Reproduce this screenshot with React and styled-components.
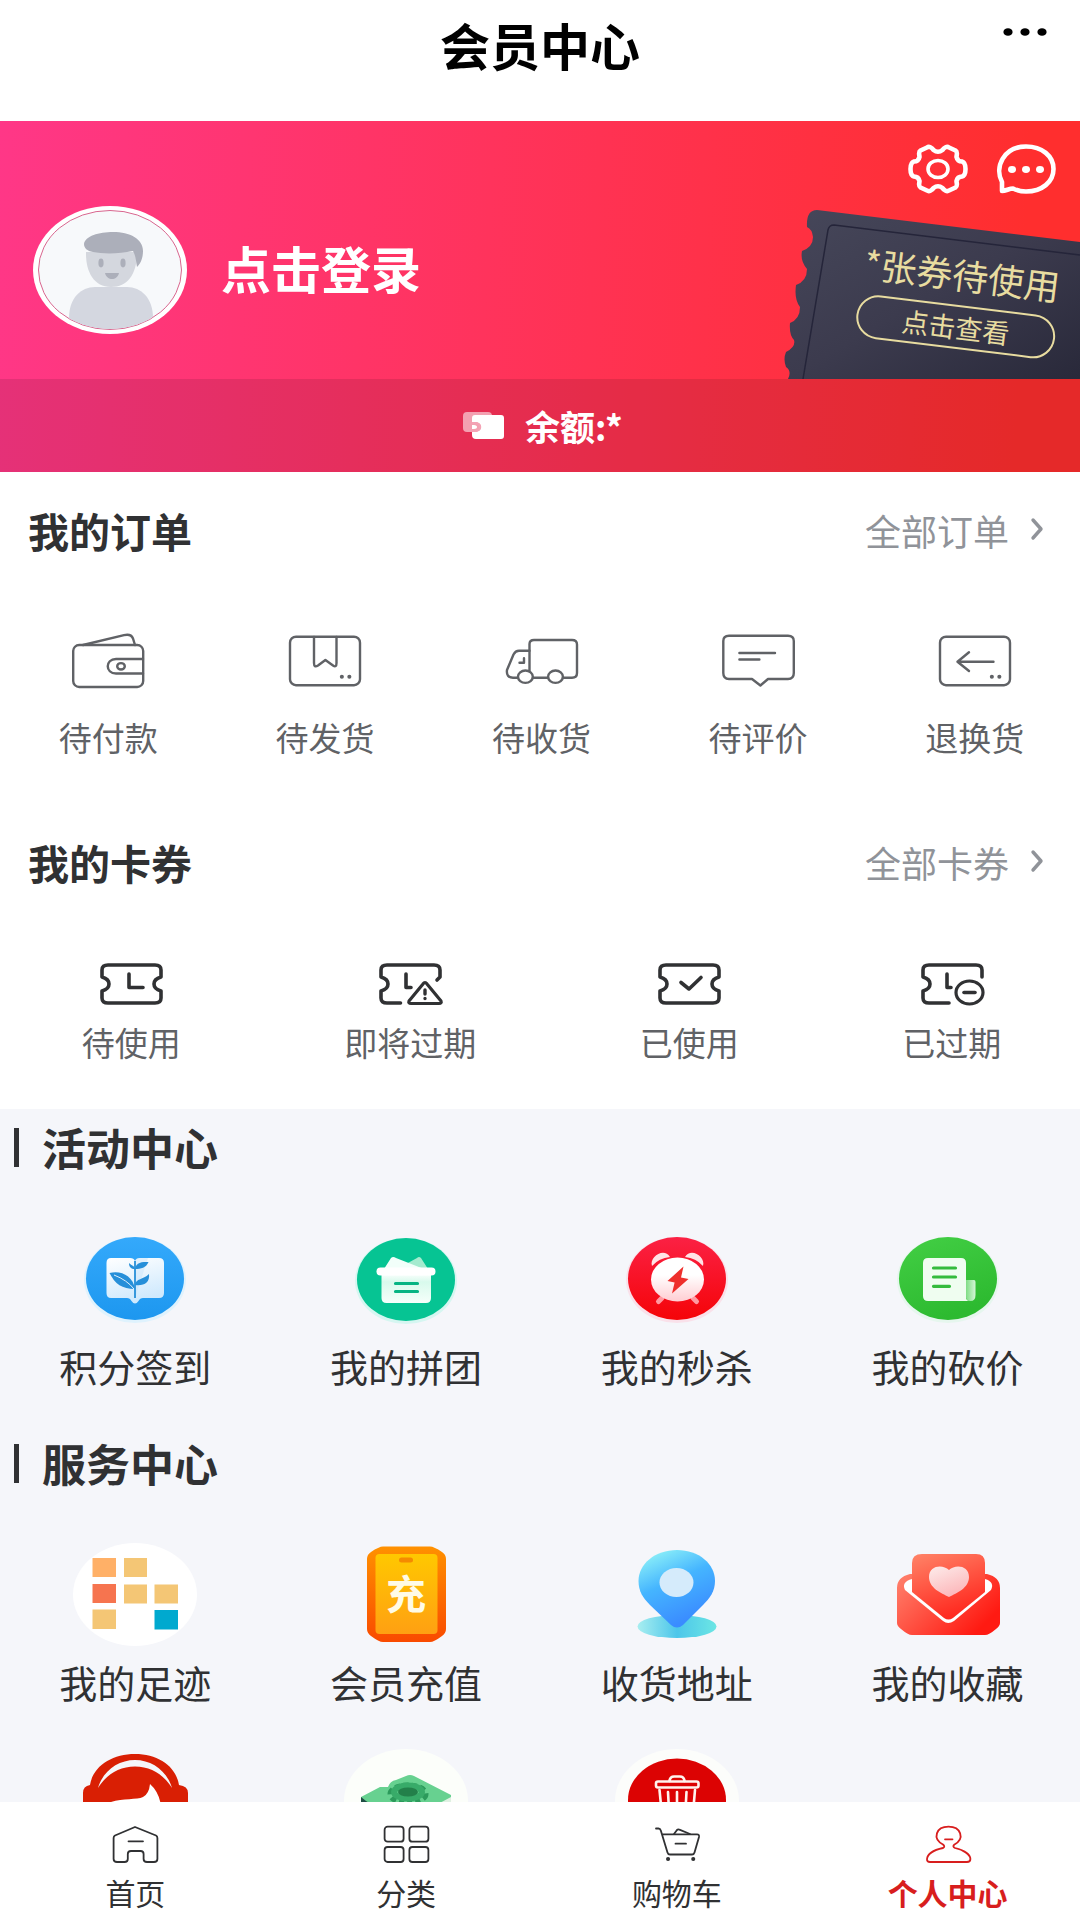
import React from "react";
import styled, { createGlobalStyle } from "styled-components";

const GlobalStyle = createGlobalStyle`
  * {
    box-sizing: border-box;
  }
  body {
    margin: 0;
    background-color: #ffffff;
    font-family: "Noto Sans CJK SC", "Noto Sans", sans-serif;
    color: #303133;
  }
  button {
    border: none;
    padding: 0;
    background: none;
    font-family: inherit;
    color: inherit;
    cursor: pointer;
  }
  a {
    color: inherit;
    text-decoration: none;
  }
  svg {
    display: block;
    flex-shrink: 0;
  }
`;

export const Page = styled.div`
  height: 100vh;
  display: flex;
  flex-direction: column;
  overflow: hidden;
`;
export const Content = styled.main`
  flex: 1;
  min-height: 0;
  overflow-x: hidden;
  overflow-y: auto;
  scrollbar-width: none;
`;

/* header */
export const Header = styled.header`
  display: grid;
  grid-template-columns: 1fr auto 1fr;
  align-items: start;
  padding: 14px 32px 47px;
`;
export const Title = styled.h1`
  grid-column: 2;
  margin: 0;
  font-size: 50px;
  line-height: 60px;
  font-weight: 700;
  color: #000000;
`;
export const MoreButton = styled.button`
  justify-self: end;
  height: 36px;
`;

/* banner */
export const Banner = styled.section`
  background: linear-gradient(93deg, #ff3787 0%, #ff335c 45%, #ff2e2e 94%);
  color: #ffffff;
`;
export const Profile = styled.div`
  position: relative;
  height: 258px;
  padding: 40px 33px 0;
  display: flex;
  align-items: center;
  overflow: hidden;
`;
export const LoginButton = styled.button`
  display: flex;
  align-items: center;
  gap: 34px;
`;
export const LoginText = styled.span`
  padding-bottom: 6px;
  font-size: 50px;
  line-height: 60px;
  font-weight: 700;
`;
export const BannerTools = styled.div`
  position: absolute;
  top: 23px;
  right: 24px;
  display: flex;
  gap: 28px;
`;
export const Ticket = styled.div`
  position: absolute;
  right: 0;
  bottom: 0;
  width: 300px;
  height: 170px;
`;
export const TicketBody = styled.div`
  position: absolute;
  top: 42px;
  left: 79px;
  width: 200px;
  display: flex;
  flex-direction: column;
  align-items: center;
  gap: 10px;
  transform: rotate(7deg);
  color: #e8dca0;
  white-space: nowrap;
`;
export const TicketText = styled.p`
  margin: 0;
  font-size: 36px;
  line-height: 44px;
`;
export const TicketButton = styled.button`
  width: 100%;
  height: 44px;
  border: 2px solid #e8dca0;
  border-radius: 22px;
  font-size: 27px;
  line-height: 36px;
`;
export const Balance = styled.div`
  display: flex;
  align-items: center;
  justify-content: center;
  gap: 20px;
  height: 93px;
  padding-left: 6px;
  background-color: rgba(0, 0, 0, 0.1);
  font-size: 35px;
  line-height: 44px;
  font-weight: 700;
`;

/* orders and coupons */
export const Panel = styled.section`
  padding: 28px 0 47px;
`;
export const PanelHead = styled.div`
  display: flex;
  align-items: center;
  justify-content: space-between;
  padding: 0 36px 0 28px;
`;
export const PanelTitle = styled.h2`
  margin: 0;
  font-size: 41px;
  line-height: 60px;
  font-weight: 700;
`;
export const PanelLink = styled.a`
  display: flex;
  align-items: center;
  gap: 21px;
  font-size: 36px;
  line-height: 44px;
  color: #909399;
`;
export const OrderList = styled.div`
  display: grid;
  grid-template-columns: repeat(5, 1fr);
  margin: 72px -3px 0 0;
`;
export const CouponList = styled.div`
  display: flex;
  justify-content: space-around;
  margin: 69px -3px 0 0;
`;
export const PanelItem = styled.a`
  display: flex;
  flex-direction: column;
  align-items: center;
  gap: ${({ $gap }) => $gap};
  font-size: 33px;
  line-height: 40px;
  color: #606266;
`;
export const CouponIcon = styled.span`
  color: #303133;
`;

/* activity and service centers */
export const Center = styled.div`
  background-color: #f5f6fa;
  padding-top: 8px;
`;
export const CenterTitle = styled.h2`
  display: flex;
  align-items: center;
  gap: 23px;
  margin: 0;
  padding-left: 14px;
  font-size: 44px;
  line-height: 60px;
  font-weight: 700;
  &::before {
    content: "";
    width: 5px;
    height: 39px;
    background-color: #303133;
  }
`;
export const CenterGrid = styled.div`
  display: grid;
  grid-template-columns: repeat(4, 1fr);
  row-gap: 40px;
  margin-right: -3px;
  padding: 50px 0 40px;
`;
export const CenterItem = styled.a`
  display: flex;
  flex-direction: column;
  align-items: center;
  gap: 10px;
  min-height: 166px;
  font-size: 38px;
  line-height: 50px;
`;

/* bottom tabs */
export const TabBar = styled.nav`
  display: grid;
  grid-template-columns: repeat(4, 1fr);
  height: 118px;
  margin-right: -3px;
  padding-top: 22px;
  background-color: #ffffff;
`;
export const Tab = styled.a`
  display: flex;
  flex-direction: column;
  align-items: center;
  gap: 10px;
  font-size: 30px;
  line-height: 36px;
  color: ${({ $active }) => ($active ? "#d81e1e" : "#303133")};
  font-weight: ${({ $active }) => ($active ? 700 : 400)};
`;

const Line = ({ w, h, stroke = 2.4, children }) => (
  <svg
    width={w}
    height={h}
    viewBox={`0 0 ${w} ${h}`}
    fill="none"
    stroke="currentColor"
    strokeWidth={stroke}
    strokeLinecap="round"
    strokeLinejoin="round"
    aria-hidden="true"
  >
    {children}
  </svg>
);

const Badge = ({ children }) => (
  <svg width="124" height="104" viewBox="0 0 124 104" aria-hidden="true">
    {children}
  </svg>
);

const Avatar = () => (
  <svg width="154" height="128" viewBox="0 0 154 128" aria-hidden="true">
    <defs>
      <clipPath id="face">
        <ellipse cx="77" cy="64" rx="71" ry="59" />
      </clipPath>
    </defs>
    <ellipse cx="77" cy="64" rx="77" ry="64" fill="#ffffff" />
    <ellipse cx="77" cy="64" rx="71.5" ry="59.5" fill="#f7f9fb" stroke="#d9668f" strokeWidth="1" />
    <g clipPath="url(#face)">
      <path d="M36 112C36 92 48 81 62 81H94C108 81 120 92 120 112V128H36Z" fill="#d4d7e0" />
      <path d="M53 48C53 66 61 81 78 81S104 68 104 46H53Z" fill="#d4d7de" />
      <path d="M51 38C52 30 66 26 80 26C97 26 110 33 110 45C110 53 107 58 104 61C103 56 103 50 100 45C86 48 70 48 60 46C54 45 51 42 51 38Z" fill="#acafba" />
      <ellipse cx="68" cy="57" rx="2.6" ry="4.4" fill="#acafba" />
      <ellipse cx="90" cy="57" rx="2.6" ry="4.4" fill="#acafba" />
      <path d="M72 67H86C85 71 82 73 79 73S73 71 72 67Z" fill="#acafba" />
    </g>
  </svg>
);

const GearIcon = () => (
  <Line w={60} h={50} stroke={4.6}>
    <path d="M19 3.5C21 2 24 3.5 25.500 6Q30 9.500 34.500 6C36 3.500 39 2 41 3.500L47.500 6.500C50 8 48.500 11 48.500 13Q49.500 17.500 54 17.500C57.500 18.500 57.500 22 57.500 25S57.500 31.500 54 32.500Q49.500 32.500 48.500 37C48.500 39 50 42 47.500 43.500L41 46.500C39 48 36 46.500 34.500 44Q30 40.500 25.500 44C24 46.500 21 48 19 46.500L12.500 43.500C10 42 11.500 39 11.500 37Q10.500 32.500 6 32.500C2.500 31.500 2.500 28 2.500 25S2.500 18.500 6 17.500Q10.500 17.500 11.500 13C11.500 11 10 8 12.500 6.500Z" />
    <ellipse cx="30" cy="25" rx="10" ry="8.500" strokeWidth="3.600" />
  </Line>
);

const ChatIcon = () => (
  <Line w={60} h={50} stroke={4.6}>
    <path d="M6 47V38C-2 23 8 2.500 30 2.500C46 2.500 57.500 12 57.500 25S46 47.500 30 47.500C25 47.500 21 46.500 17 44.500C13 44.500 10 47 6 47Z" />
    <g fill="currentColor" stroke="none">
      <ellipse cx="16" cy="25.500" rx="4" ry="3.400" />
      <ellipse cx="30" cy="25.500" rx="4" ry="3.400" />
      <ellipse cx="44" cy="25.500" rx="4" ry="3.400" />
    </g>
  </Line>
);

const TicketShape = () => (
  <svg width="300" height="170" viewBox="0 0 300 170" aria-hidden="true">
    <defs>
      <linearGradient id="ticket" x1="0" y1="0" x2="1" y2="1">
        <stop offset="0" stopColor="#46475a" />
        <stop offset="0.500" stopColor="#3c3b4e" />
        <stop offset="1" stopColor="#29293a" />
      </linearGradient>
    </defs>
    <path
      d="M37 1L300 33V170H8Q12 162 6 158Q3 150 6 143Q16 138 14 131Q9 126 10 114Q20 110 20 98Q14 90 16 76Q27 72 27 60Q20 52 22 42Q33 38 33 28Q32 20 27 18Q26 1 37 1Z"
      fill="url(#ticket)"
    />
    <path d="M23 170L48 21Q49 16 54 16L300 46" fill="none" stroke="#25253a" strokeWidth="1.500" />
  </svg>
);

const PurseIcon = () => (
  <svg width="42" height="30" viewBox="0 0 42 30" aria-hidden="true">
    <rect x="0" y="1" width="29" height="20" rx="4" fill="#ffffff" opacity="0.550" />
    <path d="M12 4H38Q41 4 41 7V25Q41 28 38 28H13Q9 28 9 24V21H12C20 21 20 11 12 11H9V7Q9 4 12 4Z" fill="#ffffff" />
    <path d="M9 12H12C19 12 19 20 12 20H9" fill="none" stroke="#f4a3b5" strokeWidth="2" />
    <path d="M9 14H11C15 14 15 18 11 18H9Z" fill="#ffffff" />
  </svg>
);

const orders = [
  {
    name: "待付款",
    icon: (
      <>
        <rect x="5.200" y="13" width="70" height="42" rx="6" />
        <path d="M15 13L56 3.200Q63 1.500 65 6.500L67 13" />
        <path d="M75 27H48C37 27 37 41.500 48 41.500H75" />
        <ellipse cx="53" cy="34.300" rx="3.800" ry="3.200" />
      </>
    ),
  },
  {
    name: "待发货",
    icon: (
      <>
        <rect x="5" y="4.700" width="70" height="48.500" rx="6" />
        <path d="M29 5V31Q29 36 33 33.500L40.400 28L48 33.500Q51.500 36 51.500 31V5" />
        <path d="M56.800 44.700h.1M64.300 44.700h.1" strokeWidth="4" />
      </>
    ),
  },
  {
    name: "待收货",
    icon: (
      <>
        <path d="M16.500 45.700H12Q5 45.700 6 38L12.500 22.500Q14.500 18.700 18 18.700H28.500" />
        <path d="M28.500 39V12Q28.500 8 33 8H71Q76 8 76 12.500V41Q76 45.700 71 45.700H62M47 45.700H32" />
        <ellipse cx="24.400" cy="44.700" rx="7.400" ry="6.200" />
        <ellipse cx="54.500" cy="44.700" rx="7.400" ry="6.200" />
        <path d="M23 26.300V30.700H18.500" />
      </>
    ),
  },
  {
    name: "待评价",
    icon: (
      <>
        <path d="M11 3.700H70Q75.800 3.700 75.800 9V41Q75.800 47 70 47H50L42.400 53.500L34 47H11Q5.300 47 5.300 41V9Q5.300 3.700 11 3.700Z" />
        <path d="M21.400 21H57M21.400 27.500H41.400" />
      </>
    ),
  },
  {
    name: "退换货",
    icon: (
      <>
        <rect x="5" y="4.700" width="70" height="48.500" rx="6" />
        <path d="M58.500 29.700H22.500M34 20.300L22.500 29.700L34 39" />
        <path d="M56.800 44.700h.1M64.300 44.700h.1" strokeWidth="4" />
      </>
    ),
  },
];

const couponFrame =
  "M11 4H58Q64 4 64 9V16Q57 18 57 23T64 30V37Q64 42 58 42H11Q5 42 5 37V30Q12 28 12 23T5 16V9Q5 4 11 4Z";

const coupons = [
  {
    name: "待使用",
    icon: (
      <>
        <path d={couponFrame} />
        <path d="M32 13V26.500H46" />
      </>
    ),
  },
  {
    name: "即将过期",
    icon: (
      <>
        <path d="M24.500 42H11Q5 42 5 37V30Q12 28 12 23T5 16V9Q5 4 11 4H58Q64 4 64 9V16L61 19" />
        <path d="M30 13V26.500H35" />
        <path d="M49 21.500Q50 21.500 51 23L65 40Q66 42.500 63 42.500H35Q32 42.500 33 40L47 23Q48 21.500 49 21.500Z" strokeWidth="3.200" />
        <path d="M49 29V33M49 37.500V37.600" strokeWidth="3.400" />
      </>
    ),
  },
  {
    name: "已使用",
    icon: (
      <>
        <path d={couponFrame} />
        <path d="M26 21.500L34 28L46 16.500" />
      </>
    ),
  },
  {
    name: "已过期",
    icon: (
      <>
        <path d="M31 42H11Q5 42 5 37V30Q12 28 12 23T5 16V9Q5 4 11 4H58Q64 4 64 9V16" />
        <path d="M29 13V26.500H33" />
        <ellipse cx="51.500" cy="31.500" rx="13.500" ry="11.500" strokeWidth="3.200" />
        <path d="M46 31.500H57" />
      </>
    ),
  },
];

const activities = [
  {
    name: "积分签到",
    icon: (
      <Badge>
        <defs>
          <linearGradient id="sign" x1="0" y1="0" x2="0" y2="1">
            <stop offset="0" stopColor="#34a9fb" />
            <stop offset="1" stopColor="#1d97ef" />
          </linearGradient>
          <linearGradient id="book" x1="0" y1="0" x2="0.300" y2="1">
            <stop offset="0" stopColor="#ffffff" />
            <stop offset="1" stopColor="#cfe9fd" />
          </linearGradient>
        </defs>
        <ellipse cx="62" cy="53" rx="51" ry="43" fill="#d5f1fd" opacity="0.700" />
        <ellipse cx="62" cy="51.500" rx="49" ry="41.500" fill="url(#sign)" />
        <path d="M38 31H57Q61 31 62 34Q63 31 67 31H86Q91 31 91 36V66Q91 71 86 71H70Q67 71 65.500 74Q62 79 58.500 74Q57 71 54 71H38Q33.500 71 33.500 66V36Q33.500 31 38 31Z" fill="url(#book)" />
        <path d="M62 34V71L75 31H67Q63 31 62 34Z" fill="#b9defa" opacity="0.350" />
        <g fill="#268fd9">
          <path d="M36.500 46C48 43 60 49 62 62C49 62 42 57 36.500 46Z" />
          <path d="M76 47C77 56 71 59 62 58C63 51 70 53 76 47Z" />
          <path d="M75.500 35C73 41 68 42 62 42C63 35 69 35 75.500 35Z" />
          <path d="M56 36C56 40 58 42 62 42C61 38 59 39 56 36Z" />
        </g>
        <path d="M62 34V71" stroke="#268fd9" strokeWidth="1.800" />
        <path d="M41 48Q54 53 61 62" stroke="#dff0fc" strokeWidth="1" fill="none" />
      </Badge>
    ),
  },
  {
    name: "我的拼团",
    icon: (
      <Badge>
        <defs>
          <linearGradient id="group" x1="0" y1="0" x2="0" y2="1">
            <stop offset="0" stopColor="#ffffff" />
            <stop offset="0.300" stopColor="#d8faec" />
            <stop offset="1" stopColor="#f6fffb" />
          </linearGradient>
        </defs>
        <ellipse cx="62" cy="54" rx="51" ry="43" fill="#c9f7ec" opacity="0.700" />
        <ellipse cx="62" cy="52.500" rx="49" ry="41.500" fill="#06c493" />
        <path d="M62 37L73 31Q75 29 77 31L84 42H62Z" fill="#a5ebcf" />
        <path d="M40 42L47 31Q49 29 52 31L80 42Z" fill="#f2fffa" />
        <path d="M37.500 46H87V71Q87 76 82 76H42.500Q37.500 76 37.500 71Z" fill="url(#group)" />
        <rect x="32.500" y="40.500" width="59" height="8" rx="4" fill="#ffffff" />
        <path d="M51.500 56.500H73.500M51.500 64.500H73.500" stroke="#06b483" strokeWidth="3.200" strokeLinecap="round" />
      </Badge>
    ),
  },
  {
    name: "我的秒杀",
    icon: (
      <Badge>
        <defs>
          <linearGradient id="kill" x1="0" y1="0" x2="0" y2="1">
            <stop offset="0" stopColor="#fb2144" />
            <stop offset="1" stopColor="#f50408" />
          </linearGradient>
          <linearGradient id="clock" x1="0" y1="0" x2="0" y2="1">
            <stop offset="0.400" stopColor="#ffffff" />
            <stop offset="1" stopColor="#ffcdd2" />
          </linearGradient>
        </defs>
        <ellipse cx="62" cy="53" rx="51" ry="43" fill="#fbd9e2" opacity="0.700" />
        <ellipse cx="62" cy="51.500" rx="49" ry="41.500" fill="url(#kill)" />
        <path d="M37 39C34 30 49 20 55 30Q44 31 37 39Z" fill="#ffe3e6" />
        <path d="M88 39C91 30 76 20 70 30Q81 31 88 39Z" fill="#ffe3e6" />
        <path d="M43.500 74.500L47 71M81.500 74.500L78 71" stroke="#ff9aa2" strokeWidth="5" strokeLinecap="round" />
        <ellipse cx="62.500" cy="52.500" rx="26.500" ry="22" fill="url(#clock)" />
        <path d="M68.500 39.500L52.500 54L59.600 55.500L57 66.500L73.500 52L66 50.500Z" fill="#ee2f2c" />
      </Badge>
    ),
  },
  {
    name: "我的砍价",
    icon: (
      <Badge>
        <defs>
          <linearGradient id="cut" x1="0" y1="0" x2="0.400" y2="1">
            <stop offset="0" stopColor="#43cf45" />
            <stop offset="1" stopColor="#2dba30" />
          </linearGradient>
          <linearGradient id="curl" x1="0" y1="0" x2="1" y2="0">
            <stop offset="0" stopColor="#7fdc84" />
            <stop offset="1" stopColor="#d3f6d6" />
          </linearGradient>
        </defs>
        <ellipse cx="62" cy="53" rx="51" ry="43" fill="#dff6e8" opacity="0.700" />
        <ellipse cx="62" cy="51.500" rx="49" ry="41.500" fill="url(#cut)" />
        <path d="M42 31H75Q80 31 80 36V70Q80 74 84 74H42Q37 74 37 69V36Q37 31 42 31Z" fill="#effdf0" />
        <path d="M80 53H88Q89.500 53 89.500 55V68Q89.500 74 84.500 74T80 68Z" fill="url(#curl)" />
        <path d="M47.500 41H69.500M47.500 50H69.500M47.500 59.300H63.500" stroke="#34bb3d" strokeWidth="3.200" strokeLinecap="round" />
      </Badge>
    ),
  },
];

const services = [
  {
    name: "我的足迹",
    icon: (
      <Badge>
        <ellipse cx="62" cy="51.500" rx="62" ry="51.500" fill="#ffffff" />
        <path d="M19.500 15H43V34H19.500Z" fill="#ffb067" />
        <path d="M51 15H74V34H51ZM51 41.500H74V60.500H51ZM81.500 41.500H105V60.500H81.500ZM19.500 66.500H43V86H19.500Z" fill="#f4c675" />
        <path d="M19.500 41H43V60H19.500Z" fill="#f6744f" />
        <path d="M81.500 67H105V86.500H81.500Z" fill="#00a9cf" />
      </Badge>
    ),
  },
  {
    name: "会员充值",
    icon: (
      <Badge>
        <defs>
          <linearGradient id="phone" x1="0" y1="0" x2="0" y2="1">
            <stop offset="0" stopColor="#ff9100" />
            <stop offset="1" stopColor="#f94a00" />
          </linearGradient>
          <linearGradient id="screen" x1="0" y1="0" x2="0" y2="1">
            <stop offset="0" stopColor="#ffc800" />
            <stop offset="1" stopColor="#ffa012" />
          </linearGradient>
        </defs>
        <path d="M39 3.500H86Q90 3.500 98 9Q102 11.500 102 16V86Q102 90 98 93Q90 99 86 99H39Q35 99 27 93Q23 90 23 86V16Q23 11.500 27 9Q35 3.500 39 3.500Z" fill="url(#phone)" />
        <rect x="31.500" y="11" width="62" height="80" rx="4" fill="url(#screen)" />
        <rect x="55" y="14.500" width="14" height="5" rx="2.500" fill="#f58a00" />
        <text x="62" y="66" textAnchor="middle" fontSize="40" fontWeight="700" fill="#fffbe6">
          充
        </text>
      </Badge>
    ),
  },
  {
    name: "收货地址",
    icon: (
      <Badge>
        <defs>
          <linearGradient id="pin" x1="0.250" y1="0" x2="0.650" y2="0.900">
            <stop offset="0" stopColor="#8cf0f8" />
            <stop offset="0.450" stopColor="#45b5ff" />
            <stop offset="1" stopColor="#3a8cff" />
          </linearGradient>
          <linearGradient id="base" x1="0" y1="0" x2="1" y2="0">
            <stop offset="0" stopColor="#a8eef0" />
            <stop offset="0.500" stopColor="#4cc6ea" />
            <stop offset="1" stopColor="#6ce6e4" />
          </linearGradient>
        </defs>
        <ellipse cx="62" cy="83.500" rx="39.500" ry="11.500" fill="url(#base)" />
        <path d="M62 7C84 7 100 21 100 38C100 48 95 55 88 62L68 82Q62 87 56 82L35 62C28 55 23.500 48 23.500 38C23.500 21 40 7 62 7Z" fill="url(#pin)" />
        <ellipse cx="61.500" cy="39.500" rx="17" ry="14.500" fill="#d5ebfb" />
      </Badge>
    ),
  },
  {
    name: "我的收藏",
    icon: (
      <Badge>
        <defs>
          <linearGradient id="mail" x1="0" y1="0.200" x2="1" y2="0.800">
            <stop offset="0" stopColor="#ff7a66" />
            <stop offset="0.900" stopColor="#ff1a12" />
          </linearGradient>
          <linearGradient id="letter" x1="0" y1="0" x2="0.400" y2="1">
            <stop offset="0" stopColor="#ff8468" />
            <stop offset="1" stopColor="#ff2a20" />
          </linearGradient>
          <linearGradient id="heart" x1="0" y1="0" x2="0.500" y2="1">
            <stop offset="0" stopColor="#fdeceb" />
            <stop offset="1" stopColor="#fcb8bb" />
          </linearGradient>
        </defs>
        <path d="M24 31H101Q114 34 114 45V80Q114 83 110 86Q103 92 99 92H26Q22 92 15 86Q11 83 11 80V45Q11 34 24 31Z" fill="url(#mail)" />
        <path d="M26 36Q15 39 19 47L57 78Q62 82 68 78L105 47Q109 39 99 36Z" fill="#ffffff" />
        <path d="M36 11H90Q99 11 99 20V49L67 75Q62.500 78 58 75L26 49V20Q26 11 36 11Z" fill="url(#letter)" />
        <path d="M63 27C69 21 83 22 83 34C83 45 71 50 63 54C55 50 43 45 43 34C43 22 57 21 63 27Z" fill="url(#heart)" />
      </Badge>
    ),
  },
  {
    label: "客服",
    icon: (
      <Badge>
        <path d="M17 36C20 17 39 5 62 5S103 17 106 36Q115 37 115 44V80H10V44Q10 37 17 36Z" fill="#d91f04" />
        <path d="M25 39C30 22 45 11 62 11S94 22 99 39C91 26 78 17.500 62 17.500S33 26 25 39Z" fill="#f5f6fa" />
        <path d="M38 53C50 49 64 51 70 48Q76 45 77 35Q85 42 87.500 54V90H38Z" fill="#ffffff" />
      </Badge>
    ),
  },
  {
    label: "设置",
    icon: (
      <Badge>
        <ellipse cx="62" cy="52" rx="62" ry="52" fill="#fcfefa" />
        <path d="M17 48L36 38H44Q46 32 52 31L62 27Q66 25 70 27L107 46V52L62 76L17 56Z" fill="#67d190" />
        <path d="M17 48L22 52L62 76V92L17 70Z" fill="#1f4d45" />
        <path d="M107 48L62 72V92L107 68Z" fill="#dff0e2" />
        <ellipse cx="64" cy="45" rx="17" ry="8" fill="none" stroke="#2c9a5b" strokeWidth="7" strokeDasharray="5 3" />
        <ellipse cx="64" cy="43" rx="14" ry="6.500" fill="none" stroke="#38ab69" strokeWidth="6" />
        <ellipse cx="64" cy="43" rx="10" ry="4.500" fill="#23804a" />
      </Badge>
    ),
  },
  {
    label: "清除缓存",
    icon: (
      <Badge>
        <ellipse cx="62" cy="52" rx="62" ry="52" fill="#fcfdfb" />
        <ellipse cx="62" cy="51" rx="49" ry="41.500" fill="#dc0303" />
        <g fill="none" stroke="#fff3ee" strokeWidth="2.600" strokeLinecap="round" strokeLinejoin="round">
          <rect x="41" y="32.500" width="42.500" height="6" rx="2" />
          <path d="M54.500 32Q55 27.500 59 27.500H65Q69 27.500 69.500 32" />
          <path d="M44.500 41L48 76H77L80 41M53 43L54.500 70M62 43V70M71.500 43L70 70" />
        </g>
      </Badge>
    ),
  },
];

const tabs = [
  {
    name: "首页",
    icon: (
      <path d="M24 3L45 11.500Q46.400 12.200 46.400 14V35Q46.400 38 43 38H36Q32.600 38 32.600 35V30Q32.600 27 29.500 27H20Q16.800 27 16.800 30V35Q16.800 38 13.500 38H6Q2.600 38 2.600 35V14Q2.600 12.200 4 11.500ZM17.500 17.300H32" />
    ),
  },
  {
    name: "分类",
    icon: (
      <>
        <rect x="2.600" y="2.700" width="19" height="15" rx="3" />
        <rect x="27.400" y="2.700" width="19" height="15" rx="3" />
        <rect x="2.600" y="23" width="19" height="15" rx="3" />
        <rect x="27.400" y="23" width="19" height="15" rx="3" />
      </>
    ),
  },
  {
    name: "购物车",
    icon: (
      <>
        <path d="M3 4.500H5.500Q7.200 4.500 7.800 6.500L14.500 28.500Q15 30.500 17 30.500H39Q41 30.500 41.500 28.500L46 13Q46.500 10.300 44 10.300H9" />
        <path d="M21 10L24 6Q25 5 27 5.800L37 10M22.500 19.700H33" />
        <path d="M15 35h.1M40.200 35h.1" strokeWidth="4" />
      </>
    ),
  },
  {
    name: "个人中心",
    active: true,
    icon: (
      <>
        <path d="M19 24Q21.500 22.500 19 20.500C8 14.500 12 2.700 24.500 2.700S41 14.500 30.500 20.500Q28 22.500 31 24C39 26 46.400 30 46.400 35Q46.400 38 43 38H6Q2.800 38 3 35C3.500 30 10 26 19 24Z" />
        <path d="M21 15.300H28.500" />
      </>
    ),
  },
];

const MoreLink = ({ children }) => (
  <PanelLink href="#">
    {children}
    <Line w={14} h={26} stroke={3.4}>
      <path d="M3 3L11 12L3 21" />
    </Line>
  </PanelLink>
);

const CenterBlock = ({ title, items }) => (
  <section>
    <CenterTitle>{title}</CenterTitle>
    <CenterGrid>
      {items.map((item) => (
        <CenterItem href="#" key={item.name || item.label} aria-label={item.label}>
          {item.icon}
          {item.name}
        </CenterItem>
      ))}
    </CenterGrid>
  </section>
);

export default function App() {
  return (
    <Page>
      <GlobalStyle />
      <Content>
        <Header>
          <Title>会员中心</Title>
          <MoreButton aria-label="更多">
            <svg width="46" height="36" viewBox="0 0 46 36" aria-hidden="true">
              <ellipse cx="6" cy="18" rx="4.600" ry="3.800" />
              <ellipse cx="23" cy="18" rx="4.600" ry="3.800" />
              <ellipse cx="40" cy="18" rx="4.600" ry="3.800" />
            </svg>
          </MoreButton>
        </Header>

        <Banner>
          <Profile>
            <LoginButton>
              <Avatar />
              <LoginText>点击登录</LoginText>
            </LoginButton>
            <BannerTools>
              <button aria-label="设置">
                <GearIcon />
              </button>
              <button aria-label="消息">
                <ChatIcon />
              </button>
            </BannerTools>
            <Ticket>
              <TicketShape />
              <TicketBody>
                <TicketText>*张券待使用</TicketText>
                <TicketButton>点击查看</TicketButton>
              </TicketBody>
            </Ticket>
          </Profile>
          <Balance>
            <PurseIcon />
            余额:*
          </Balance>
        </Banner>

        <Panel>
          <PanelHead>
            <PanelTitle>我的订单</PanelTitle>
            <MoreLink>全部订单</MoreLink>
          </PanelHead>
          <OrderList>
            {orders.map((item) => (
              <PanelItem href="#" key={item.name} $gap="27px">
                <Line w={80} h={58}>
                  {item.icon}
                </Line>
                {item.name}
              </PanelItem>
            ))}
          </OrderList>
        </Panel>

        <Panel>
          <PanelHead>
            <PanelTitle>我的卡券</PanelTitle>
            <MoreLink>全部卡券</MoreLink>
          </PanelHead>
          <CouponList>
            {coupons.map((item) => (
              <PanelItem href="#" key={item.name} $gap="15px">
                <CouponIcon>
                  <Line w={68} h={46} stroke={3.6}>
                    {item.icon}
                  </Line>
                </CouponIcon>
                {item.name}
              </PanelItem>
            ))}
          </CouponList>
        </Panel>

        <Center>
          <CenterBlock title="活动中心" items={activities} />
          <CenterBlock title="服务中心" items={services} />
        </Center>
      </Content>

      <TabBar>
        {tabs.map((tab) => (
          <Tab href="#" key={tab.name} $active={tab.active}>
            <Line w={48} h={40} stroke={1.8}>
              {tab.icon}
            </Line>
            {tab.name}
          </Tab>
        ))}
      </TabBar>
    </Page>
  );
}
